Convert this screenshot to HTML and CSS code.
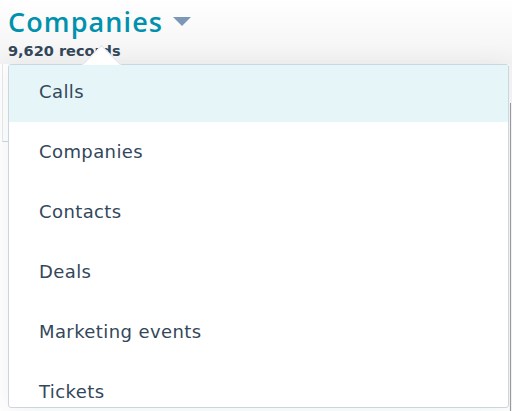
FILE: index.html
```html
<!DOCTYPE html>
<html lang="en">
<head>
  <meta charset="UTF-8" />
  <title>Companies</title>
  <link rel="stylesheet" href="styles.css">
</head>
<body>
  <div class="header">
    <h1 class="title">Companies <span class="caret"></span></h1>
    <div class="records">9,620 records</div>
  </div>
  <div class="toolbar"></div>

  <div class="dropdown">
    <div class="pointer"></div>
    <ul class="options">
      <li class="option active">Calls</li>
      <li class="option">Companies</li>
      <li class="option">Contacts</li>
      <li class="option">Deals</li>
      <li class="option">Marketing events</li>
      <li class="option">Tickets</li>
    </ul>
  </div>
  <div class="scrollbar"><div class="thumb"></div></div>
</body>
</html>
```

FILE: styles.css
```css
body {
  margin: 0;
  font-family: "Open Sans", "Liberation Sans", sans-serif;
  color: #33475b;
  background-color: #fff;
  height: 411px;
  overflow: hidden;
}
.header {
  padding: 4px 8px 0 8px;
  height: 60px;
  background: linear-gradient(#fff, #f3f3f3);
}
.title {
  margin: 0;
  font-size: 27px;
  font-weight: 600;
  color: #0091ae;
  line-height: 36px;
  letter-spacing: 1.1px;
}
.caret {
  display: inline-block;
  vertical-align: 6px;
  margin-left: 2px;
  width: 0;
  height: 0;
  border-left: 9px solid transparent;
  border-right: 9px solid transparent;
  border-top: 9px solid #7c98b6;
}
.records {
  margin-top: 1px;
  font-family: "DejaVu Sans", sans-serif;
  font-size: 14.5px;
  font-weight: 700;
  line-height: 20px;
}
.toolbar {
  height: 77px;
  border-left: 1px solid #e6e9ec;
  margin-left: 2px;
  border-bottom: 1px solid #cbd6e2;
}
.dropdown {
  position: absolute;
  left: 8px;
  top: 64px;
  width: 499px;
  height: 342px;
  background: #fff;
  border: 1px solid #cbd6e2;
  border-radius: 3px;
  box-shadow: 0 1px 24px rgba(45, 62, 80, 0.08);
}
.pointer {
  position: absolute;
  left: 78px;
  top: -14px;
  width: 28px;
  height: 28px;
  background: #fff;
  border-left: 1px solid #dfe3eb;
  border-top: 1px solid #dfe3eb;
  transform: rotate(45deg);
}
.options {
  position: relative;
  list-style: none;
  margin: 0;
  padding: 0;
  height: 100%;
  overflow: hidden;
}
.option {
  height: 60px;
  line-height: 60px;
  padding-left: 30px;
  font-family: "DejaVu Sans", sans-serif;
  font-size: 18px;
  letter-spacing: 0.4px;
}
.option:first-child {
  margin-top: -3px;
}
.option.active {
  background-color: #e5f5f8;
}
.scrollbar {
  position: absolute;
  right: 0;
  top: 64px;
  width: 3px;
  height: 347px;
  background: #f1f1f1;
}
.thumb {
  margin-top: 39px;
  margin-left: 1px;
  width: 1px;
  height: 308px;
  background: #9a9a9a;
}
```
